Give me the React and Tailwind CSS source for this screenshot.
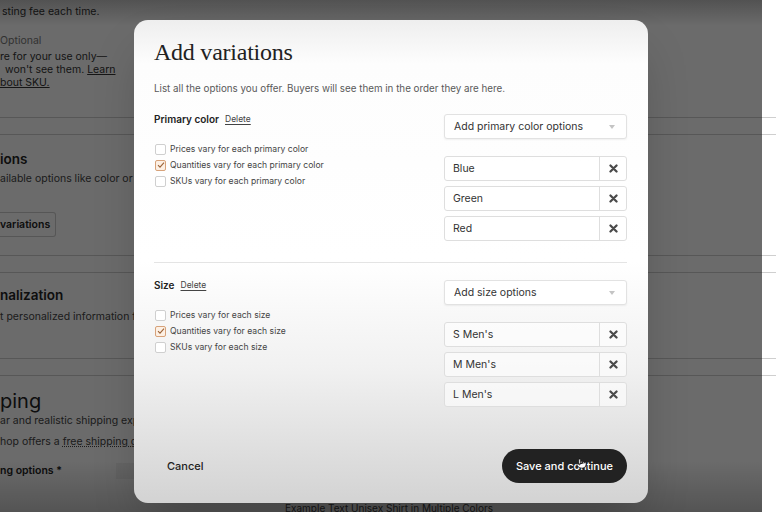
import { Pointer } from 'lucide-react'

const sans = { fontFamily: 'Inter, "Liberation Sans", Arial, sans-serif' }

function Check({ checked }) {
  return (
    <span
      className={
        checked
          ? 'w-[11px] h-[11px] rounded-[2px] border border-[#d7a27a] bg-[#fdf0e4] flex items-center justify-center shrink-0'
          : 'w-[11px] h-[11px] rounded-[2px] border border-[#cfcfcf] bg-white shrink-0'
      }
    >
      {checked && (
        <svg width="8" height="8" viewBox="0 0 8 8">
          <path d="M1 4.2 L3 6.2 L7 1.6" fill="none" stroke="#9c6338" strokeWidth="1.1" />
        </svg>
      )}
    </span>
  )
}

function OptionRow({ label }) {
  return (
    <div className="h-[25px] flex border border-[#dedede] rounded-[3px] bg-white/60">
      <div className="flex-1 flex items-center pl-[8px] text-[10.5px] text-[#333]">{label}</div>
      <div className="w-[27px] border-l border-[#dedede] flex items-center justify-center">
        <svg width="9" height="9" viewBox="0 0 8 8">
          <path d="M1.3 1.3 L6.7 6.7 M6.7 1.3 L1.3 6.7" stroke="#4a4a4a" strokeWidth="2" strokeLinecap="round" />
        </svg>
      </div>
    </div>
  )
}

function Section({ name, placeholder, noun, checked, options }) {
  return (
    <div className="grid grid-cols-[1fr_183px]">
      <div>
        <div className="flex items-center gap-[6px] leading-[10px]">
          <span className="text-[10px] font-semibold text-[#222]">{name}</span>
          <span className="text-[8.5px] text-[#444] underline underline-offset-2">Delete</span>
        </div>
        <div className="mt-[17px] flex flex-col pl-[1px]">
          {['Prices', 'Quantities', 'SKUs'].map((k) => (
            <div key={k} className="h-[16px] flex items-center gap-[4px] text-[8.6px] text-[#444]">
              <Check checked={checked === k} />
              <span>
                {k} vary for each {noun}
              </span>
            </div>
          ))}
        </div>
      </div>
      <div>
        <div className="h-[25px] border border-[#e2e2e2] rounded-[3px] bg-white shadow-[0_1px_2px_rgba(0,0,0,0.06)] flex items-center justify-between pl-[9px] pr-[11px]">
          <span className="text-[10.5px] text-[#333]">{placeholder}</span>
          <svg width="6" height="4" viewBox="0 0 6 4">
            <path d="M0 0 L6 0 L3 4 Z" fill="#c4c4c4" />
          </svg>
        </div>
        <div className="mt-[17px] flex flex-col gap-[5px]">
          {options.map((o) => (
            <OptionRow key={o} label={o} />
          ))}
        </div>
      </div>
    </div>
  )
}

export default function App() {
  return (
    <div className="relative w-[776px] h-[512px] overflow-hidden bg-white text-[#222]" style={sans}>
      {/* page behind the dialog */}
      <div className="flex flex-col text-[10.5px]">
        <div className="h-[20px] flex items-end pl-[2px] text-[#333]">sting fee each time.</div>
        <div className="mt-[14px] text-[#777] leading-[14px]">Optional</div>
        <div className="mt-[2px] leading-[13px] text-[#333]">re for your use only—</div>
        <div className="leading-[13px] text-[#333] pl-[5px]">
          won't see them. <span className="underline">Learn</span>
        </div>
        <div className="leading-[13px] text-[#333] underline">bout SKU.</div>
        <div className="mt-[28px] border-t border-[#cfcfcf] h-[17px]" />
        <div className="border-t border-[#cfcfcf]" />
        <div className="mt-[15px] text-[13.5px] font-semibold leading-[18px]">ions</div>
        <div className="mt-[4px] text-[#444] leading-[14px]">ailable options like color or size</div>
        <div className="mt-[26px] w-[56px] h-[25px] border border-[#ccc] border-l-0 rounded-r-[3px] flex items-center font-semibold">
          variations
        </div>
        <div className="mt-[18px] border-t border-[#cfcfcf] h-[17px]" />
        <div className="border-t border-[#cfcfcf]" />
        <div className="mt-[13px] text-[13.5px] font-semibold leading-[18px]">nalization</div>
        <div className="mt-[6px] text-[#444] leading-[14px]">t personalized information for</div>
        <div className="mt-[34px] border-t border-[#cfcfcf] h-[17px]" />
        <div className="border-t border-[#cfcfcf]" />
        <div className="mt-[13px] text-[20px] leading-[24px]">ping</div>
        <div className="mt-[1px] text-[#444] leading-[14px]">ar and realistic shipping expectations</div>
        <div className="mt-[7px] text-[#444] leading-[14px]">
          hop offers a <span className="underline decoration-dotted">free shipping guarantee</span>
        </div>
        <div className="mt-[14px] flex items-center h-[16px]">
          <span className="font-semibold">ng options *</span>
          <div className="ml-[54px] w-[200px] h-[16px] bg-[#f2f2f2]" />
        </div>
        <div className="mt-[22px] pl-[285px] text-[10px] leading-[14px] text-[#444]">
          Example Text Unisex Shirt in Multiple Colors
        </div>
      </div>

      {/* dim overlay */}
      <div className="absolute left-0 top-0 bottom-0 right-[14px] bg-[linear-gradient(to_bottom,rgba(0,0,0,0.68),rgba(0,0,0,0.58)_5%,rgba(0,0,0,0.58)_90%,rgba(0,0,0,0.67))]" />

      {/* dialog */}
      <div className="absolute left-[134px] top-[20px] w-[514px] h-[483px] rounded-[14px] overflow-hidden shadow-2xl bg-[linear-gradient(to_bottom,#eeeeee_0%,#fdfdfd_9%,#ffffff_50%,#f1f1f1_72%,#d3d3d3_100%)] flex flex-col pl-[20px] pr-[21px]">
        <h2
          className="mt-[15px] text-[24px] leading-[34px] tracking-[-0.01em] text-[#222]"
          style={{ fontFamily: '"Liberation Serif", "DejaVu Serif", serif' }}
        >
          Add variations
        </h2>
        <p className="mt-[13px] text-[9.8px] leading-[14px] text-[#595959]">
          List all the options you offer. Buyers will see them in the order they are here.
        </p>

        <div className="mt-[18px]">
          <Section
            name="Primary color"
            placeholder="Add primary color options"
            noun="primary color"
            checked="Quantities"
            options={['Blue', 'Green', 'Red']}
          />
        </div>

        <div className="mt-[21px] border-t border-[#e4e4e4]" />

        <div className="mt-[17px]">
          <Section
            name="Size"
            placeholder="Add size options"
            noun="size"
            checked="Quantities"
            options={["S Men's", "M Men's", "L Men's"]}
          />
        </div>

        <div className="mt-auto mb-[20px] flex items-center justify-between pl-[13px]">
          <span className="text-[11px] font-medium text-[#222]">Cancel</span>
          <div className="relative h-[34px] px-[14px] rounded-full bg-[#222] text-white text-[11px] font-medium flex items-center">
            Save and continue
            <Pointer
              size={11}
              fill="white"
              stroke="#111"
              strokeWidth={1.6}
              className="absolute left-[74px] top-[9px]"
            />
          </div>
        </div>
      </div>
    </div>
  )
}
